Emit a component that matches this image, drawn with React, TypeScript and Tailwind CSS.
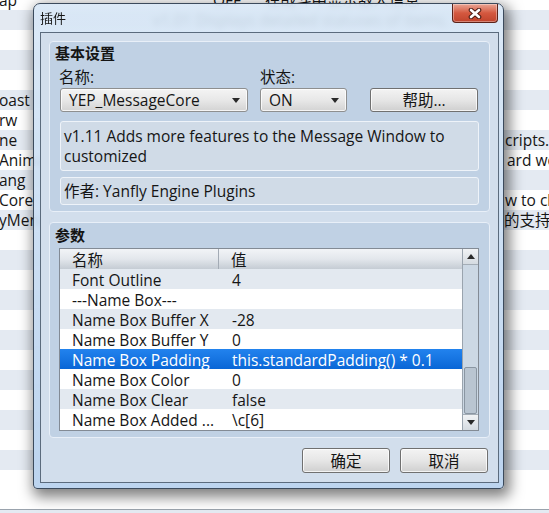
type BgRow = { name?: string; status?: string; desc?: string; tail?: string; tailCls?: string };

// plugin list rows behind the dialog, 20px each, starting half a row above the top
const bgRows: BgRow[] = [
  { name: 'ap', status: 'OFF', desc: '在战斗中显示敌人信息' },
  { tail: 'v1.01 Displays detailed statuses of items.', tailCls: '-ml-[112px]' },
  {},
  {},
  {},
  { name: 'oast' },
  { name: 'rw' },
  { name: 'ne', tail: 'cripts.', tailCls: 'pl-[240px]' },
  { name: 'Animation', tail: 'ard words', tailCls: 'pl-[242px]' },
  { name: 'ang' },
  { name: 'Core', tail: 'w to change', tailCls: 'pl-[240px]' },
  { name: 'yMenuCore', tail: '的支持功能', tailCls: 'pl-[239px]' },
  {}, {}, {}, {}, {}, {}, {}, {}, {}, {}, {}, {}, {},
];

const params: [string, string][] = [
  ['Font Outline', '4'],
  ['---Name Box---', ''],
  ['Name Box Buffer X', '-28'],
  ['Name Box Buffer Y', '0'],
  ['Name Box Padding', 'this.standardPadding() * 0.1'],
  ['Name Box Color', '0'],
  ['Name Box Clear', 'false'],
  ['Name Box Added ...', '\\c[6]'],
];
const selectedRow = 4;

function Caret({ up = false }: { up?: boolean }) {
  return (
    <svg width="8" height="5" viewBox="0 0 8 5" className={up ? 'rotate-180' : ''}>
      <path d="M0 0h8L4 5z" fill="#2a2a2a" />
    </svg>
  );
}

function CloseGlyph() {
  return (
    <svg width="14" height="11" viewBox="0 0 14 11">
      <path d="M3 2l8 7M11 2l-8 7" stroke="#4a1a12" strokeWidth="4.6" strokeLinecap="round" />
      <path d="M3 2l8 7M11 2l-8 7" stroke="#ffffff" strokeWidth="2.6" strokeLinecap="round" />
    </svg>
  );
}

function BackgroundList() {
  return (
    <div className="-mt-[10px] flex flex-col">
      {bgRows.map((r, i) => (
        <div
          key={i}
          className={`grid h-5 grid-cols-[213px_52px_1fr] items-center whitespace-nowrap leading-5 ${i % 2 ? 'bg-[#e4eaf2]' : 'bg-white'}`}
        >
          <span className="-ml-px overflow-hidden">{r.name}</span>
          <span>{r.status}</span>
          <span className={r.tailCls}>{r.desc ?? r.tail}</span>
        </div>
      ))}
      <div className="h-[19px] bg-white" />
      <div className="h-px bg-[#9aa3ad]" />
      <div className="h-4 bg-[#e4eaf2]" />
    </div>
  );
}

function ComboBox({ value, className }: { value: string; className: string }) {
  return (
    <div
      className={`flex h-6 items-center justify-between rounded-[3px] border border-[#8e8f8f] bg-linear-to-b from-[#f4f4f4] via-[#e8e8e8] to-[#d3d3d3] pl-[8px] pr-[7px] shadow-[inset_0_0_0_1px_rgba(255,255,255,0.75)] ${className}`}
    >
      <span className="leading-5">{value}</span>
      <Caret />
    </div>
  );
}

function PushButton({ label, className }: { label: string; className: string }) {
  return (
    <button
      className={`flex items-center justify-center rounded-[3px] border border-[#707070] bg-linear-to-b from-[#f3f3f3] via-[#e6e6e6] to-[#cfcfcf] leading-5 shadow-[inset_0_0_0_1px_rgba(255,255,255,0.75)] ${className}`}
    >
      {label}
    </button>
  );
}

function ParamTable() {
  return (
    <div className="ml-[9px] mt-[3px] flex h-[183px] w-[420px] border border-[#838b95] bg-white">
      <div className="flex flex-1 flex-col">
        <div className="grid h-5 shrink-0 grid-cols-[159px_1fr] bg-linear-to-b from-[#f2f4f7] via-[#e3e7ec] to-[#c5ccd4] leading-[18px]">
          <span className="border-r border-[#a3abb5] pl-[12px] pt-[2px]">名称</span>
          <span className="pl-[12px] pt-[2px]">值</span>
        </div>
        {params.map(([name, value], i) => (
          <div
            key={name}
            className={`grid h-5 shrink-0 grid-cols-[159px_1fr] whitespace-nowrap leading-[18px] ${
              i === selectedRow
                ? 'bg-linear-to-b from-[#2283ee] to-[#0966d6] text-white'
                : i % 2 === 0
                  ? 'bg-[#e3e9f0]'
                  : 'bg-white'
            }`}
          >
            <span className="overflow-hidden pl-[12px] pt-[2px]">{name}</span>
            <span className="pl-[13px] pt-[2px]">{value}</span>
          </div>
        ))}
      </div>
      <div className="flex w-4 flex-col border-l border-[#9aa4ae] bg-[#ccd8e4]">
        <div className="flex h-4 items-center justify-center border-b border-[#a4adb6] bg-linear-to-b from-[#f1f3f5] to-[#d5dbe1]">
          <Caret up />
        </div>
        <div className="flex flex-1 flex-col justify-end">
          <div className="mx-px h-[47px] rounded-[2px] border border-[#8a96a2] bg-[#b9c5d1]" />
        </div>
        <div className="flex h-4 items-center justify-center border-t border-[#a4adb6] bg-linear-to-b from-[#f1f3f5] to-[#d5dbe1]">
          <Caret />
        </div>
      </div>
    </div>
  );
}

function PluginDialog() {
  return (
    <div className="absolute left-[33px] top-[3px] flex h-[486px] w-[471px] flex-col rounded-t-[7px] rounded-b-[4px] border border-[#3b4a5c] bg-linear-to-b from-[#d8e7f6]/90 to-[#b9d2ee]/95 shadow-[3px_5px_14px_3px_rgba(0,0,0,0.5)] backdrop-blur-[3px]">
      <div className="flex h-[28px] shrink-0 items-start">
        <span className="pl-[6px] pt-[6px] text-[13px] leading-4">插件</span>
        <button className="ml-auto mr-[5px] flex h-[19px] w-[46px] items-center justify-center rounded-b-[4px] border border-t-0 border-[#5b2219] bg-linear-to-b from-[#e9a595] via-[#d4583f] to-[#c0432c] shadow-[inset_0_0_0_1px_rgba(255,255,255,0.35)]">
          <CloseGlyph />
        </button>
      </div>

      <div className="ml-[6px] mr-[4px] flex h-[451px] flex-col border border-[#5b6b7d] bg-[#d2deec] px-[8px] pt-[8px]">
        <section className="flex h-[171px] flex-col rounded-[4px] border border-[#e8eff8] bg-[#c0d1e4]">
          <h2 className="pl-[5px] pt-px text-[15px] font-bold leading-5">基本设置</h2>
          <div className="mt-[5px] flex pl-[9px] leading-[18px]">
            <span className="w-[201px]">名称:</span>
            <span>状态:</span>
          </div>
          <div className="mt-[2px] flex pl-[10px]">
            <ComboBox value="YEP_MessageCore" className="w-[188px]" />
            <ComboBox value="ON" className="ml-[12px] w-[87px]" />
            <PushButton label="帮助..." className="ml-[23px] h-6 w-[108px]" />
          </div>
          <div className="ml-[10px] mt-[9px] h-[50px] w-[419px] rounded-[3px] border border-[#eef3f9] bg-[#d0dbe7] px-[3px] pt-[4px] leading-5">
            v1.11 Adds more features to the Message Window to customized
          </div>
          <div className="ml-[10px] mt-[6px] flex h-[28px] w-[419px] items-center rounded-[3px] border border-[#eef3f9] bg-[#d0dbe7] px-[3px] leading-5">
            作者: Yanfly Engine Plugins
          </div>
        </section>

        <section className="mt-[10px] flex h-[216px] flex-col rounded-[4px] border border-[#e8eff8] bg-[#c0d1e4]">
          <h2 className="pl-[5px] pt-[2px] text-[15px] font-bold leading-5">参数</h2>
          <ParamTable />
        </section>

        <div className="mt-[10px] flex justify-end gap-[10px] pr-[2px]">
          <PushButton label="确定" className="h-[25px] w-[88px]" />
          <PushButton label="取消" className="h-[25px] w-[88px]" />
        </div>
      </div>
    </div>
  );
}

export default function App() {
  return (
    <div className="relative h-[513px] w-[549px] overflow-hidden bg-white font-['Open_Sans','Noto_Sans_CJK_SC',sans-serif] text-[15.5px] text-[#151515]">
      <BackgroundList />
      <PluginDialog />
    </div>
  );
}
